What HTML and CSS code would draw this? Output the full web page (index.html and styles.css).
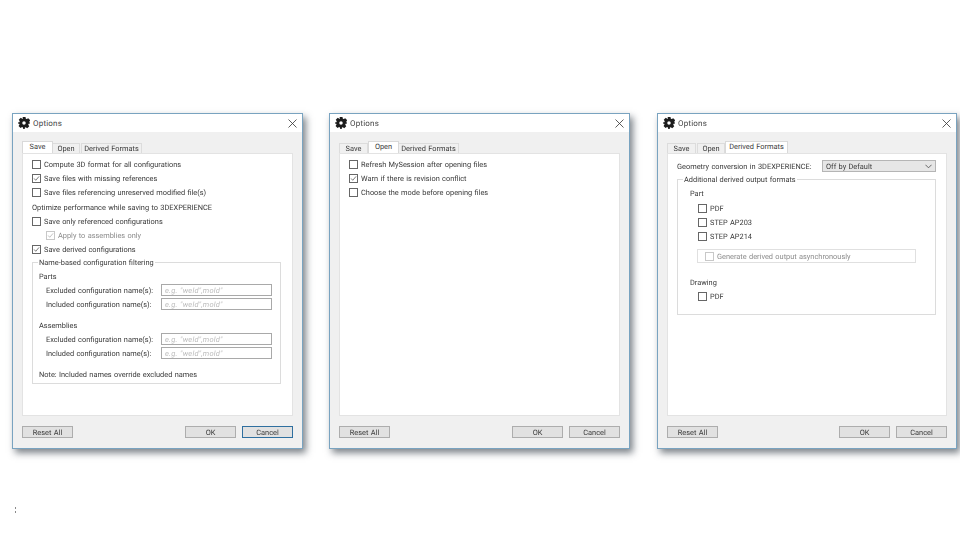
FILE: index.html
```html
<!DOCTYPE html>
<html lang="en">
<head>
<meta charset="utf-8">
<title>Options</title>
<link rel="stylesheet" href="styles.css">
</head>
<body>
<svg class="defs" width="0" height="0" aria-hidden="true">
  <symbol id="gear" viewBox="0 0 24 24"><path fill-rule="evenodd" d="M9 0h6l.7 3.500 1.700.7L20.500 2.300l4 4-2 3 .7 1.700L24 12v1l-2.800.7-.7 1.700 2 3-4 4-3-2-1.700.7L13.500 24h-3l-.7-3.200-1.700-.7-3 2-4-4 2-3-.7-1.700L0 13v-2l2.800-.7.7-1.700-2-3 4-4 3 2 1.700-.7zM12 8.500a3.500 3.500 0 1 0 0 7 3.500 3.500 0 0 0 0-7z"/></symbol>
  <symbol id="tick" viewBox="0 0 9 9"><path d="M1.500 4.500 3.500 6.800 7.800 1.800" fill="none" stroke="currentColor" stroke-width="1"/></symbol>
  <symbol id="x" viewBox="0 0 9 9"><path d="M.5.500 8.500 8.500M8.500.500 .5 8.500" fill="none" stroke="currentColor" stroke-width=".8"/></symbol>
</svg>
<main class="desktop">

  <section class="window window-save">
    <header class="titlebar">
      <svg class="gear"><use href="#gear"/></svg>
      <span class="title">Options</span>
      <svg class="close"><use href="#x"/></svg>
    </header>
    <div class="body">
      <div class="tabs">
        <span class="tab tab-save active">Save</span>
        <span class="tab tab-open">Open</span>
        <span class="tab tab-derived">Derived Formats</span>
      </div>
      <div class="panel">
        <div class="row"><span class="check"></span>Compute 3D format for all configurations</div>
        <div class="row"><span class="check"><svg class="tick"><use href="#tick"/></svg></span>Save files with missing references</div>
        <div class="row"><span class="check"></span>Save files referencing unreserved modified file(s)</div>
        <div class="row row-section">Optimize performance while saving to 3DEXPERIENCE</div>
        <div class="row"><span class="check"></span>Save only referenced configurations</div>
        <div class="row row-sub disabled"><span class="check"><svg class="tick"><use href="#tick"/></svg></span>Apply to assemblies only</div>
        <div class="row"><span class="check"><svg class="tick"><use href="#tick"/></svg></span>Save derived configurations</div>
        <fieldset class="group group-names">
          <legend>Name-based configuration filtering</legend>
          <div class="heading">Parts</div>
          <div class="field"><label>Excluded configuration name(s):</label><span class="input">e.g. "weld",mold"</span></div>
          <div class="field"><label>Included configuration name(s):</label><span class="input">e.g. "weld",mold"</span></div>
          <div class="heading heading-gap">Assemblies</div>
          <div class="field"><label>Excluded configuration name(s):</label><span class="input">e.g. "weld",mold"</span></div>
          <div class="field"><label>Included configuration name(s):</label><span class="input">e.g. "weld",mold"</span></div>
          <div class="note">Note: Included names override excluded names</div>
        </fieldset>
      </div>
      <div class="actions">
        <span class="btn">Reset All</span>
        <span class="spacer"></span>
        <span class="btn">OK</span>
        <span class="btn btn-default">Cancel</span>
      </div>
    </div>
  </section>

  <section class="window window-open">
    <header class="titlebar">
      <svg class="gear"><use href="#gear"/></svg>
      <span class="title">Options</span>
      <svg class="close"><use href="#x"/></svg>
    </header>
    <div class="body">
      <div class="tabs">
        <span class="tab tab-save">Save</span>
        <span class="tab tab-open active">Open</span>
        <span class="tab tab-derived">Derived Formats</span>
      </div>
      <div class="panel">
        <div class="row"><span class="check"></span>Refresh MySession after opening files</div>
        <div class="row"><span class="check"><svg class="tick"><use href="#tick"/></svg></span>Warn if there is revision conflict</div>
        <div class="row"><span class="check"></span>Choose the mode before opening files</div>
      </div>
      <div class="actions">
        <span class="btn">Reset All</span>
        <span class="spacer"></span>
        <span class="btn">OK</span>
        <span class="btn">Cancel</span>
      </div>
    </div>
  </section>

  <section class="window window-derived">
    <header class="titlebar">
      <svg class="gear"><use href="#gear"/></svg>
      <span class="title">Options</span>
      <svg class="close"><use href="#x"/></svg>
    </header>
    <div class="body">
      <div class="tabs">
        <span class="tab tab-save">Save</span>
        <span class="tab tab-open">Open</span>
        <span class="tab tab-derived active">Derived Formats</span>
      </div>
      <div class="panel">
        <div class="geometry">
          <span>Geometry conversion in 3DEXPERIENCE:</span>
          <span class="select">Off by Default
            <svg class="chevron" viewBox="0 0 8 5"><path d="M.5.500 4 4 7.500.500" fill="none" stroke="currentColor"/></svg>
          </span>
        </div>
        <fieldset class="group group-formats">
          <legend>Additional derived output formats</legend>
          <div class="heading">Part</div>
          <div class="row row-format row-first"><span class="check"></span>PDF</div>
          <div class="row row-format"><span class="check"></span>STEP AP203</div>
          <div class="row row-format"><span class="check"></span>STEP AP214</div>
          <div class="async disabled"><span class="check"></span>Generate derived output asynchronously</div>
          <div class="heading heading-drawing">Drawing</div>
          <div class="row row-format"><span class="check"></span>PDF</div>
        </fieldset>
      </div>
      <div class="actions">
        <span class="btn">Reset All</span>
        <span class="spacer"></span>
        <span class="btn">OK</span>
        <span class="btn">Cancel</span>
      </div>
    </div>
  </section>
</main>
<div class="mark"></div>
</body>
</html>
```

FILE: styles.css
```css
* { box-sizing: border-box; }
html, body { margin: 0; height: 100%; background: #fff; overflow: hidden; }
body {
  font-family: Roboto, "Liberation Sans", Arial, sans-serif;
  font-size: 7.4px;
  word-spacing: .5px;
  color: #3a3a3a;
  white-space: nowrap;
  text-rendering: geometricPrecision;
}
.defs { position: absolute; }

.desktop {
  display: flex;
  padding: 113px 0 0 12px;
  filter: blur(.4px);
}
.window {
  height: 336px;
  display: flex;
  flex-direction: column;
  background: #f0f0f0;
  border: 1px solid #79a3c0;
  box-shadow: 3px 4px 7px rgba(40, 50, 60, .6);
}
.window-save { width: 291px; margin-right: 26px; }
.window-open { width: 301px; margin-right: 27px; }
.window-derived { width: 300px; }

.titlebar {
  height: 18px;
  flex: none;
  display: flex;
  align-items: center;
  background: #fff;
  padding: 0 5px 0 5px;
}
.gear { width: 12px; height: 12px; fill: #1c1c1c; flex: none; }
.title { margin-left: 3px; flex: 1; color: #444; font-size: 8px; letter-spacing: .2px; }
.close { width: 9px; height: 9px; color: #333; flex: none; }

.body {
  flex: 1;
  display: flex;
  flex-direction: column;
  padding: 9px 9px 11px 9px;
}
.tabs { display: flex; height: 12px; flex: none; align-items: flex-end; }
.tab {
  height: 10px;
  display: flex;
  align-items: center;
  justify-content: center;
  border: 1px solid #dcdcdc;
  border-bottom: 0;
  margin-right: 1px;
  line-height: 1;
}
.tab-save { width: 29px; }
.tab-open { width: 28px; }
.tab-derived { width: 61px; }
.tab.active {
  height: 12px;
  background: #fff;
  margin: 0 -1px 0 -1px;
  z-index: 1;
  border-color: #d9d9d9;
  padding-bottom: 2px;
}
.tab.active:first-child { margin-left: 0; }
.tab.tab-save.active, .tab.tab-open.active { width: 31px; }
.tab.tab-derived.active { width: 63px; }

.panel {
  height: 263px;
  flex: none;
  background: #fff;
  border: 1px solid #e3e3e3;
  padding: 3px 10px 0 9px;
}

.row { display: flex; align-items: center; height: 14px; }
.row-section { margin-top: 1px; }
.row-sub { padding-left: 14px; }
.check {
  width: 9px;
  height: 9px;
  margin-right: 3px;
  border: 1px solid #666;
  background: #fff;
  flex: none;
  display: flex;
  color: #555;
}
.disabled { color: #8c8c8c; }
.disabled .check { border-color: #c8c8c8; color: #b0b0b0; }
.tick { width: 7px; height: 7px; }

.group {
  margin: 0;
  border: 1px solid #dcdcdc;
  padding: 2px 6px 0;
  min-width: 0;
}
.group legend { padding: 0 1px; line-height: 9px; margin-left: -1px; }
.group-names { margin-top: 2px; height: 126px; margin-right: 1px; }
.heading { height: 14px; display: flex; align-items: center; }
.heading-gap { margin-top: 7px; }
.field { display: flex; align-items: center; height: 14px; padding-left: 7px; }
.field label { width: 115px; flex: none; }
.input {
  width: 111px;
  height: 12px;
  display: flex;
  align-items: center;
  padding-left: 3px;
  background: #fff;
  border: 1px solid #a9a9a9;
  font-style: italic;
  font-size: 7.5px;
  letter-spacing: .2px;
  color: #bdbdbd;
}
.note { height: 14px; margin-top: 7px; display: flex; align-items: center; }

.geometry { display: flex; align-items: center; height: 12px; margin-top: 3px; justify-content: space-between; }
.select {
  width: 114px;
  height: 12px;
  display: flex;
  align-items: center;
  justify-content: space-between;
  padding: 0 3px 0 3px;
  background: #e6e6e6;
  border: 1px solid #b5b5b5;
}
.chevron { width: 7px; height: 5px; color: #555; }
.group-formats { margin-top: 3px; height: 140px; }
.group-formats .heading { padding-left: 6px; }
.row-format { padding-left: 14px; }
.row-first { margin-top: 1px; }
.async {
  height: 14px;
  margin: 6px 0 0 13px;
  display: flex;
  align-items: center;
  background: #fff;
  border: 1px solid #e0e0e0;
  padding-left: 7px;
  width: 219px;
}
.group-formats .heading-drawing { margin-top: 12px; }

.actions { display: flex; margin-top: 10px; gap: 6px; }
.spacer { flex: 1; }
.btn {
  width: 51px;
  height: 12px;
  display: flex;
  align-items: center;
  justify-content: center;
  background: #e1e1e1;
  border: 1px solid #adadad;
}
.btn-default { border-color: #2f6f9f; }

.mark {
  width: 1px;
  height: 7px;
  margin: 0 0 0 15px;
  position: absolute;
  top: 507px;
  background: repeating-linear-gradient(#8a8a8a 0 2px, transparent 2px 4px);
}
```
